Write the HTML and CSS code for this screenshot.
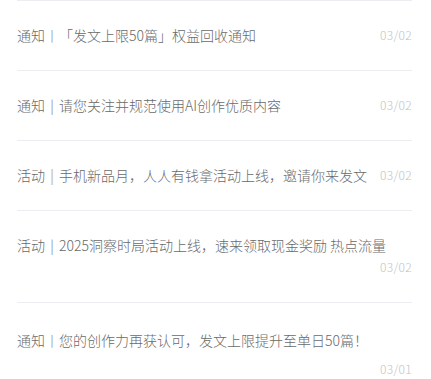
FILE: index.html
```html
<!DOCTYPE html>
<html lang="zh-CN">
<head>
<meta charset="utf-8">
<title>消息列表</title>
<link rel="stylesheet" href="styles.css">
</head>
<body>
<ul class="list">
  <li class="item">
    <span class="title">通知<span class="sep sep-cjk">丨</span>「发文上限50篇」权益回收通知</span>
    <span class="date">03/02</span>
  </li>
  <li class="item">
    <span class="title">通知<span class="sep">|</span>请您关注并规范使用AI创作优质内容</span>
    <span class="date">03/02</span>
  </li>
  <li class="item">
    <span class="title">活动<span class="sep sep-light">|</span>手机新品月，人人有钱拿活动上线，邀请你来发文</span>
    <span class="date">03/02</span>
  </li>
  <li class="item">
    <span class="title">活动<span class="sep">|</span>2025洞察时局活动上线，速来领取现金奖励 热点流量</span>
    <span class="date">03/02</span>
  </li>
  <li class="item item-last">
    <span class="title">通知<span class="sep sep-cjk">丨</span>您的创作力再获认可，发文上限提升至单日50篇！</span>
    <span class="date">03/01</span>
  </li>
</ul>
</body>
</html>
```

FILE: styles.css
```css
html, body {
  margin: 0;
  padding: 0;
  background: #ffffff;
}

body {
  font-family: "Noto Sans CJK SC", "Noto Sans", sans-serif;
}

.list {
  list-style: none;
  margin: 0;
  padding: 0 19px 0 17px;
}

.item {
  display: flex;
  flex-wrap: wrap;
  justify-content: space-between;
  align-items: center;
  column-gap: 10px;
  border-top: 1px solid #ececf1;
  padding: 23px 0 24px;
  line-height: 22px;
}

.item-last {
  padding-top: 26px;
}

.item-last .date {
  flex-basis: 100%;
  text-align: right;
  margin-top: 7px;
}

.title {
  font-size: 14px;
  font-weight: 300;
  color: #6a6a6a;
  white-space: nowrap;
}

.sep {
  display: inline-block;
  width: 14px;
  text-align: center;
  color: #777777;
}

.sep-cjk {
  color: #8c8c8c;
}

.sep-light {
  color: #c8c8c8;
  font-weight: 700;
}

.date {
  margin-left: auto;
  font-size: 12px;
  font-weight: 300;
  line-height: 22px;
  color: #c2c2c2;
  letter-spacing: 0.3px;
}
```
